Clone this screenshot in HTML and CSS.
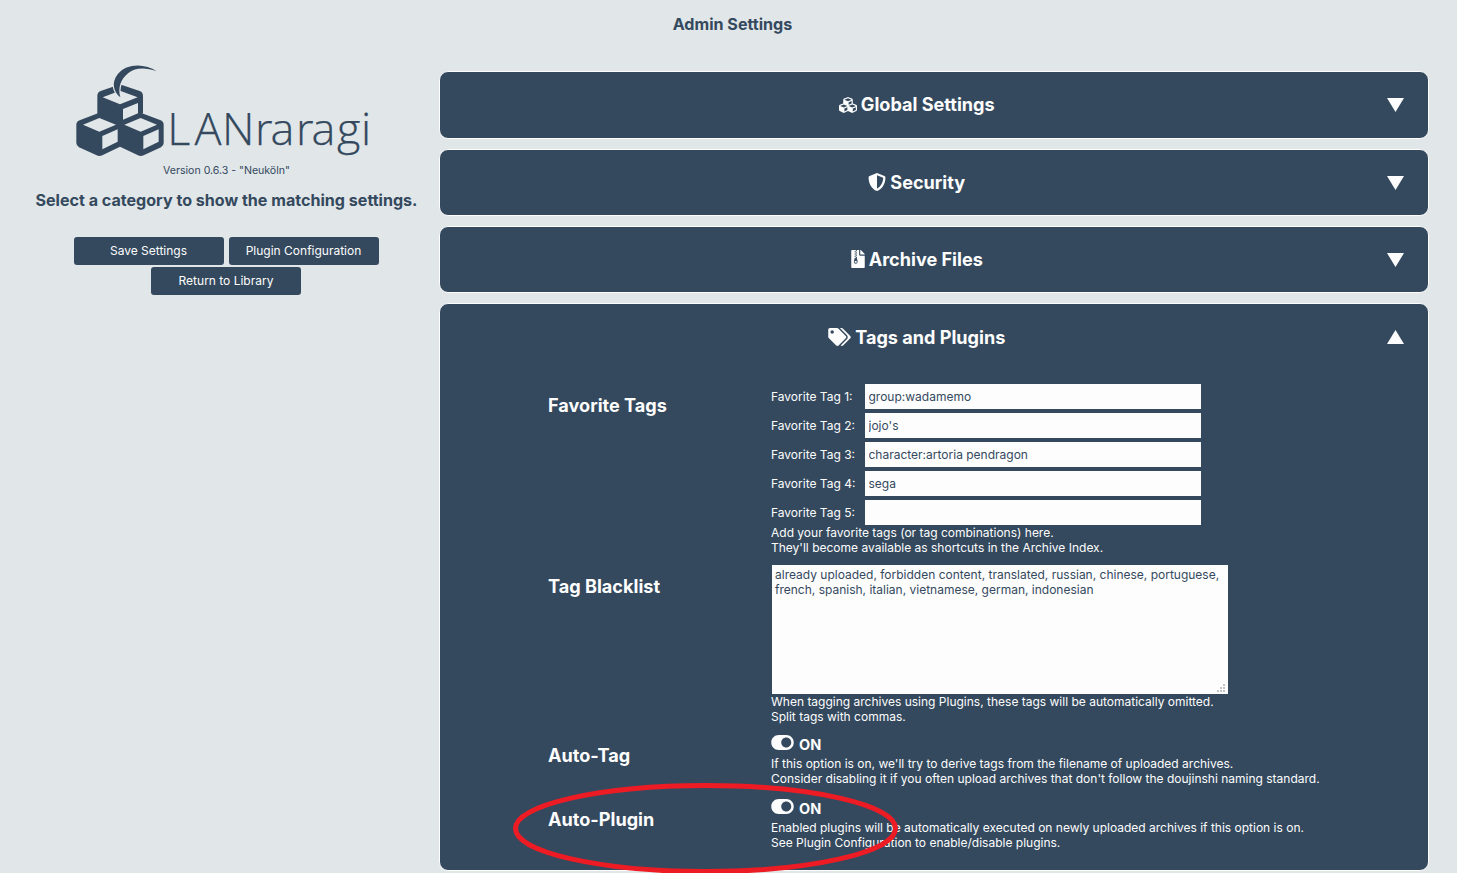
FILE: index.html
```html
<!DOCTYPE html>
<html lang="en">
<head>
<meta charset="utf-8">
<title>Admin Settings</title>
<link rel="stylesheet" href="styles.css">
</head>
<body>
<h2 class="page-title">Admin Settings</h2>
<div class="layout">
  <aside class="side">
    <svg class="logo" viewBox="0 0 310 100" role="img" aria-label="LANraragi">
      <g transform="scale(.33333)">
        <g class="ink">
          <path d="M92 93L142 76Q150 73 158 76L209 93Q219 97 219 107V160L150 196L82 165V107Q82 97 92 93Z"/>
          <path d="M29 181L80 161Q88 158 96 161L150 184L205 161Q212 158 220 161L272 181Q281 185 281 194V249Q281 257 273 262L221 286Q212 290 204 286L150 260L97 286Q88 290 80 286L27 262Q19 257 19 249V194Q19 185 29 181Z"/>
        </g>
        <g class="paper">
          <path d="M98 112L150 92L203 112L150 133ZM159 147L204 129V160L159 179ZM39 194L88 174L138 194L88 215ZM97 228L143 208V245L97 268ZM163 194L212 174L261 194L212 215ZM220 228L266 208V245L220 268Z"/>
        </g>
        <path class="crescent" d="M260 34C225 10 170 9 143 43C123 68 131 97 151 112C143 82 152 58 175 39C197 22 226 22 260 34Z"/>
      </g>
      <text class="wordmark" x="97.200 124.500 152 185 200.500 226 241.500 267 291" y="85">LANraragi</text>
    </svg>
    <p class="version">Version 0.6.3 - "Neuköln"</p>
    <h2 class="hint">Select a category to show the matching settings.</h2>
    <div class="buttons">
      <button class="btn">Save Settings</button>
      <button class="btn">Plugin Configuration</button>
      <button class="btn">Return to Library</button>
    </div>
  </aside>
  <main class="panels">
    <section class="panel first">
      <h3 class="panel-head"><span class="head-title"><svg class="ic cubes" viewBox="0 0 512 512"><path d="M488.6 250.2L392 214V105.5c0-15-9.3-28.4-23.4-33.7l-100-37.5c-8.1-3.1-17.1-3.1-25.3 0l-100 37.5c-14.1 5.3-23.4 18.7-23.4 33.7V214l-96.6 36.2C9.3 255.5 0 268.9 0 283.9V394c0 13.6 7.7 26.1 19.9 32.2l100 50c10.1 5.1 22.1 5.1 32.2 0l103.9-52 103.9 52c10.1 5.1 22.1 5.1 32.2 0l100-50c12.2-6.1 19.9-18.6 19.9-32.2V283.9c0-15-9.3-28.4-23.4-33.7zM358 214.8l-85 31.9v-68.2l85-37v73.3zM154 104.1l102-38.2 102 38.2v.6l-102 41.4-102-41.4v-.6zm84 291.1l-85 42.5v-79.1l85-38.8v75.4zm0-112l-102 41.4-102-41.4v-.6l102-38.2 102 38.2v.6zm240 112l-85 42.5v-79.1l85-38.8v75.4zm0-112l-102 41.4-102-41.4v-.6l102-38.2 102 38.2v.6z"/></svg><span>Global Settings</span></span><svg class="arrow" viewBox="0 0 17 14"><path d="M0 0H17L8.5 14Z"/></svg></h3>
    </section>
    <section class="panel">
      <h3 class="panel-head"><span class="head-title"><svg class="ic" viewBox="0 0 512 512"><path d="M466.5 83.7l-192-80a48.15 48.15 0 0 0-36.9 0l-192 80C27.7 91.1 16 108.6 16 128c0 198.5 114.5 335.7 221.5 380.3 11.8 4.9 25.1 4.9 36.9 0C360.1 472.6 496 349.3 496 128c0-19.4-11.7-36.9-29.5-44.3zM256.1 446.3l-.1-381 175.9 73.3c-3.3 151.4-82.1 261.1-175.8 307.7z"/></svg><span>Security</span></span><svg class="arrow" viewBox="0 0 17 14"><path d="M0 0H17L8.5 14Z"/></svg></h3>
    </section>
    <section class="panel">
      <h3 class="panel-head"><span class="head-title"><svg class="ic file" viewBox="0 0 384 512"><path fill-rule="evenodd" d="M377 105L279 7c-4.500-4.500-10.600-7-17-7H256v128h128v-6.100c0-6.300-2.500-12.400-7-16.900zM224 136V0H24C10.700 0 0 10.700 0 24v464c0 13.300 10.700 24 24 24h336c13.300 0 24-10.700 24-24V160H248c-13.200 0-24-10.800-24-24zM128 0h32v32h-32zM96 32h32v32H96zM128 64h32v32h-32zM96 96h32v32H96zM128 128h32v32h-32zM96 160h32v32H96zM128 192h32v32h-32zM107 226h42c6 0 11 4 12 10l18 86c8 40-17 70-51 70s-60-32-51-70l18-86c1-6 6-10 12-10zM128 316c-18 0-32 11-32 24s14 24 32 24 32-11 32-24-14-24-32-24z"/></svg><span>Archive Files</span></span><svg class="arrow" viewBox="0 0 17 14"><path d="M0 0H17L8.500 14Z"/></svg></h3>
    </section>
    <section class="panel open">
      <h3 class="panel-head"><span class="head-title"><svg class="ic tags" viewBox="0 0 640 512"><path d="M497.941 225.941L286.059 14.059A48 48 0 0 0 252.118 0H48C21.490 0 0 21.490 0 48v204.118a48 48 0 0 0 14.059 33.941l211.882 211.882c18.744 18.745 49.136 18.746 67.882 0l204.118-204.118c18.745-18.745 18.745-49.137 0-67.882zM112 160c-26.510 0-48-21.490-48-48s21.490-48 48-48 48 21.490 48 48-21.490 48-48 48zm513.941 133.823L421.823 497.941c-18.745 18.745-49.137 18.745-67.882 0l-.36-.36L527.640 323.522c16.999-16.999 26.360-39.600 26.360-63.640s-9.362-46.641-26.360-63.640L331.397 0h48.721a48 48 0 0 1 33.941 14.059l211.882 211.882c18.745 18.745 18.745 49.137 0 67.882z"/></svg><span>Tags and Plugins</span></span><svg class="arrow" viewBox="0 0 17 14"><path d="M0 14H17L8.500 0Z"/></svg></h3>
      <div class="options">
        <h4 class="opt-name top">Favorite Tags</h4>
        <div class="opt-body favorites">
          <div class="fav"><label for="f1">Favorite Tag 1:</label><input id="f1" value="group:wadamemo"></div>
          <div class="fav"><label for="f2">Favorite Tag 2:</label><input id="f2" value="jojo's"></div>
          <div class="fav"><label for="f3">Favorite Tag 3:</label><input id="f3" value="character:artoria pendragon"></div>
          <div class="fav"><label for="f4">Favorite Tag 4:</label><input id="f4" value="sega"></div>
          <div class="fav"><label for="f5">Favorite Tag 5:</label><input id="f5" value=""></div>
          <p>Add your favorite tags (or tag combinations) here.<br>They'll become available as shortcuts in the Archive Index.</p>
        </div>
        <h4 class="opt-name">Tag Blacklist</h4>
        <div class="opt-body blacklist">
          <div class="area-wrap">
            <textarea>already uploaded, forbidden content, translated, russian, chinese, portuguese,
french, spanish, italian, vietnamese, german, indonesian</textarea>
            <svg class="grip" viewBox="0 0 8 8"><path d="M6 0h2v2H6zM3 3h2v2H3zM6 3h2v2H6zM0 6h2v2H0zM3 6h2v2H3zM6 6h2v2H6z"/></svg>
          </div>
          <p>When tagging archives using Plugins, these tags will be automatically omitted.<br>Split tags with commas.</p>
        </div>
        <h4 class="opt-name">Auto-Tag</h4>
        <div class="opt-body">
          <div class="toggle"><svg viewBox="0 64 576 384"><path d="M384 64H192C86 64 0 150 0 256s86 192 192 192h192c106 0 192-86 192-192S490 64 384 64zm0 320c-70.800 0-128-57.300-128-128 0-70.800 57.300-128 128-128 70.800 0 128 57.300 128 128 0 70.800-57.300 128-128 128z"/></svg><span>ON</span></div>
          <p>If this option is on, we'll try to derive tags from the filename of uploaded archives.<br>Consider disabling it if you often upload archives that don't follow the doujinshi naming standard.</p>
        </div>
        <h4 class="opt-name">Auto-Plugin</h4>
        <div class="opt-body">
          <div class="toggle"><svg viewBox="0 64 576 384"><path d="M384 64H192C86 64 0 150 0 256s86 192 192 192h192c106 0 192-86 192-192S490 64 384 64zm0 320c-70.800 0-128-57.300-128-128 0-70.800 57.300-128 128-128 70.800 0 128 57.300 128 128 0 70.800-57.300 128-128 128z"/></svg><span>ON</span></div>
          <p>Enabled plugins will be automatically executed on newly uploaded archives if this option is on.<br>See Plugin Configuration to enable/disable plugins.</p>
        </div>
      </div>
    </section>
  </main>
</div>
<svg class="marker" viewBox="0 0 386 92"><ellipse cx="192.500" cy="46.500" rx="190" ry="43"/></svg>
</body>
</html>
```
FILE: styles.css
```css
* { box-sizing: border-box; }
html { overflow: hidden; }
body {
  margin: 0;
  height: 873px;
  overflow: hidden;
  position: relative;
  background: #e1e6e8;
  color: #34495e;
  font: 12px/15px Inter, "Liberation Sans", sans-serif;
}
h2, h3, h4, p { margin: 0; }
.page-title {
  padding: 14px 0 0 8px;
  height: 71px;
  text-align: center;
  font-size: 16.1px;
  line-height: 20px;
}
.layout { display: flex; }
.side { width: 439px; padding-left: 14px; display: flex; flex-direction: column; align-items: center; }
.logo { width: 310px; height: 100px; margin: -11px 3px 0 0; }
.ink { fill: #34495e; }
.paper { fill: #e1e6e8; }
.crescent { fill: #34495e; stroke: #e1e6e8; stroke-width: 7px; paint-order: stroke; }
.wordmark { fill: #34495e; stroke: #34495e; stroke-width: .25px; font: 300 45px "Open Sans", sans-serif; }
.version { margin-top: 3px; font-size: 10.6px; line-height: 15px; letter-spacing: -0.02px; }
.hint { margin-top: 12px; font-size: 16.09px; line-height: 20px; white-space: nowrap; }
.buttons { width: 321px; margin: 27px 1px 0 0; display: flex; flex-wrap: wrap; justify-content: center; gap: 2px 5px; }
.btn {
  width: 150px; height: 28px; padding: 0 0 2px;
  border: 0; border-radius: 3px;
  background: #34495e; color: #fdfdfd;
  font: 12px/15px Inter, sans-serif;
}
.panels { width: 990px; display: flex; flex-direction: column; gap: 10px; }
.panel { height: 67px; border: 1px solid #fdfdfd; border-radius: 9px; background: #34495e; color: #fdfdfd; }
.panel.first { height: 68px; }
.panel.open { height: 568px; }
.panel-head { height: 65px; padding: 0 24.5px 0 0; display: flex; align-items: center; font-size: 18.1px; line-height: 22px; }
.panel.first .panel-head { height: 66px; }
.panel.open .panel-head { height: 67px; }
.head-title { flex: 1; display: flex; align-items: center; justify-content: center; gap: 4px; padding-left: 7px; }
.head-title span { margin-top: -2px; }
.ic { width: 18px; height: 18px; margin-top: -1px; fill: #fdfdfd; }
.file { width: 14px; }
.tags { width: 23px; }
.arrow { width: 17px; height: 14px; fill: #fdfdfd; }
.open .arrow { margin-top: -1px; }
.options {
  display: grid;
  grid-template-columns: 223px 1fr;
  grid-template-rows: 183px 169px 64px 64px;
  padding: 11px 0 0 108px;
}
.opt-name { padding-top: 10px; font-size: 18.1px; line-height: 22px; }
.opt-name.top { padding-top: 12px; }
.opt-body { padding-top: 1px; }
.favorites { padding-top: 0; }
.favorites p { margin-top: -2px; }
.blacklist { padding-top: 0; }
.fav { display: flex; align-items: center; height: 29px; }
.fav label { width: 94px; }
.fav input {
  width: 336px; height: 25px; border: 0; padding: 0 3.5px;
  background: #fdfdfd; color: #34495e; font: 12px/15px Inter, sans-serif;
}
.area-wrap { position: relative; width: 456px; height: 129px; margin-left: 1px; }
.area-wrap textarea {
  display: block; width: 456px; height: 129px; border: 0; padding: 2px 3px;
  resize: none; overflow: hidden; white-space: pre;
  background: #fdfdfd; color: #34495e; font: 12px/15px Inter, sans-serif;
}
.grip { position: absolute; right: 3px; bottom: 2px; width: 8px; height: 8px; fill: #c3c3c3; }
.toggle { display: flex; height: 21px; gap: 5px; font-size: 14.5px; font-weight: 700; line-height: 20px; }
.toggle svg { width: 23px; height: 15px; fill: #fdfdfd; }
.marker { position: absolute; left: 513px; top: 782px; width: 386px; height: 92px; fill: none; stroke: #ed1c24; stroke-width: 5px; }
```
